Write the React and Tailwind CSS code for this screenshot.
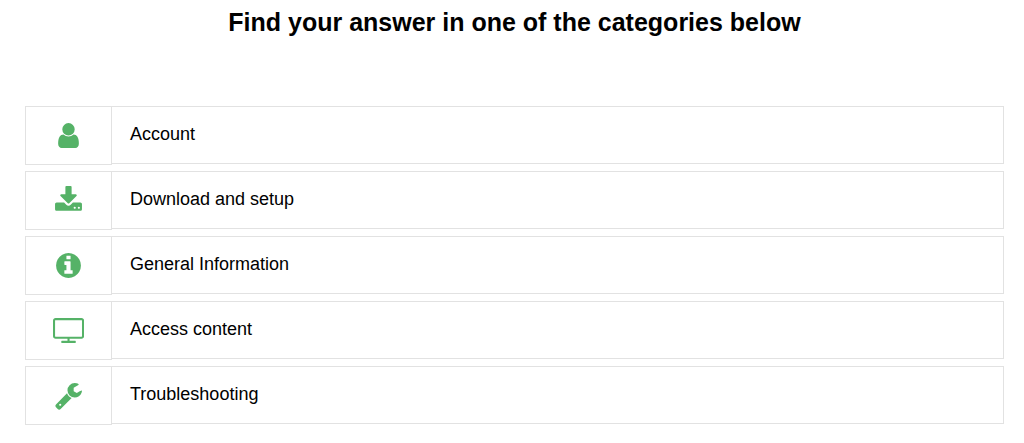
import React from 'react';

const categories = [
  {
    title: 'Account',
    width: 1792,
    path: 'M1536 1399q0 109-62.5 187t-150.5 78h-854q-88 0-150.5-78t-62.5-187q0-85 8.500-160.500t31.500-152 58.500-131 94-89 134.500-34.500q131 128 313 128t313-128q76 0 134.500 34.500t94 89 58.500 131 31.500 152 8.500 160.500zm-256-887q0 159-112.500 271.500t-271.500 112.500-271.500-112.500-112.500-271.500 112.500-271.500 271.500-112.500 271.500 112.500 112.500 271.500z',
  },
  {
    title: 'Download and setup',
    width: 1792,
    path: 'M1344 1344q0-26-19-45t-45-19-45 19-19 45 19 45 45 19 45-19 19-45zm256 0q0-26-19-45t-45-19-45 19-19 45 19 45 45 19 45-19 19-45zm128-224v320q0 40-28 68t-68 28h-1472q-40 0-68-28t-28-68v-320q0-40 28-68t68-28h465l135 136q58 56 136 56t136-56l136-136h464q40 0 68 28t28 68zm-325-569q17 41-14 70l-448 448q-18 19-45 19t-45-19l-448-448q-31-29-14-70 17-39 59-39h256v-448q0-26 19-45t45-19h256q26 0 45 19t19 45v448h256q42 0 59 39z',
  },
  {
    title: 'General Information',
    width: 1792,
    path: 'M1152 1376v-160q0-14-9-23t-23-9h-96v-512q0-14-9-23t-23-9h-320q-14 0-23 9t-9 23v160q0 14 9 23t23 9h96v320h-96q-14 0-23 9t-9 23v160q0 14 9 23t23 9h448q14 0 23-9t9-23zm-128-896v-160q0-14-9-23t-23-9h-192q-14 0-23 9t-9 23v160q0 14 9 23t23 9h192q14 0 23-9t9-23zm640 416q0 209-103 385.500t-279.500 279.500-385.500 103-385.500-103-279.500-279.500-103-385.500 103-385.500 279.500-279.500 385.500-103 385.500 103 279.500 279.500 103 385.500z',
  },
  {
    title: 'Access content',
    width: 1920,
    path: 'M1792 1248v-960q0-13-9.500-22.500t-22.500-9.500h-1600q-13 0-22.500 9.500t-9.500 22.500v960q0 13 9.500 22.500t22.500 9.500h1600q13 0 22.500-9.500t9.500-22.500zm128-960v960q0 66-47 113t-113 47h-736v128h352q14 0 23 9t9 23v64q0 14-9 23t-23 9h-832q-14 0-23-9t-9-23v-64q0-14 9-23t23-9h352v-128h-736q-66 0-113-47t-47-113v-960q0-66 47-113t113-47h1600q66 0 113 47t47 113z',
  },
  {
    title: 'Troubleshooting',
    width: 1792,
    path: 'M448 1472q0-26-19-45t-45-19-45 19-19 45 19 45 45 19 45-19 19-45zm644-420l-682 682q-37 37-90 37-52 0-91-37l-106-108q-38-36-38-90 0-53 38-91l681-681q39 98 114.500 173.500t173.500 114.500zm634-435q0 39-23 106-47 134-164.500 217.500t-258.500 83.500q-185 0-316.500-131.500t-131.500-316.500 131.500-316.500 316.500-131.500q58 0 121.500 16.500t107.500 46.500q16 11 16 28t-16 28l-293 169v224l193 107q5-3 79-48.500t135.500-81 70.500-35.500q15 0 23.500 10t8.500 25z',
  },
];

function CategoryLink({ category }) {
  return (
    <a href="#" className="flex items-start hover:underline">
      <span className="flex h-[59px] w-[87px] shrink-0 items-center justify-center border border-[#e2e2e2] text-[#55b267]">
        <svg viewBox={`0 0 ${category.width} 1792`} className="h-[29px]" fill="currentColor" aria-hidden="true">
          <path d={category.path} />
        </svg>
      </span>
      <span className="flex h-[58px] grow items-center border border-l-0 border-[#e2e2e2] px-[18px] pb-0.5 text-lg">
        {category.title}
      </span>
    </a>
  );
}

function App() {
  return (
    <main className="bg-white pt-1 pr-5 pl-[25px] font-['Liberation_Sans',Arial,sans-serif] text-black">
      <h1 className="text-center text-[25px] leading-9 font-bold">
        Find your answer in one of the categories below
      </h1>

      <ul className="mt-[66px] flex flex-col gap-[6px]">
        {categories.map((category) => (
          <li key={category.title}>
            <CategoryLink category={category} />
          </li>
        ))}
      </ul>
    </main>
  );
}

export default App;
